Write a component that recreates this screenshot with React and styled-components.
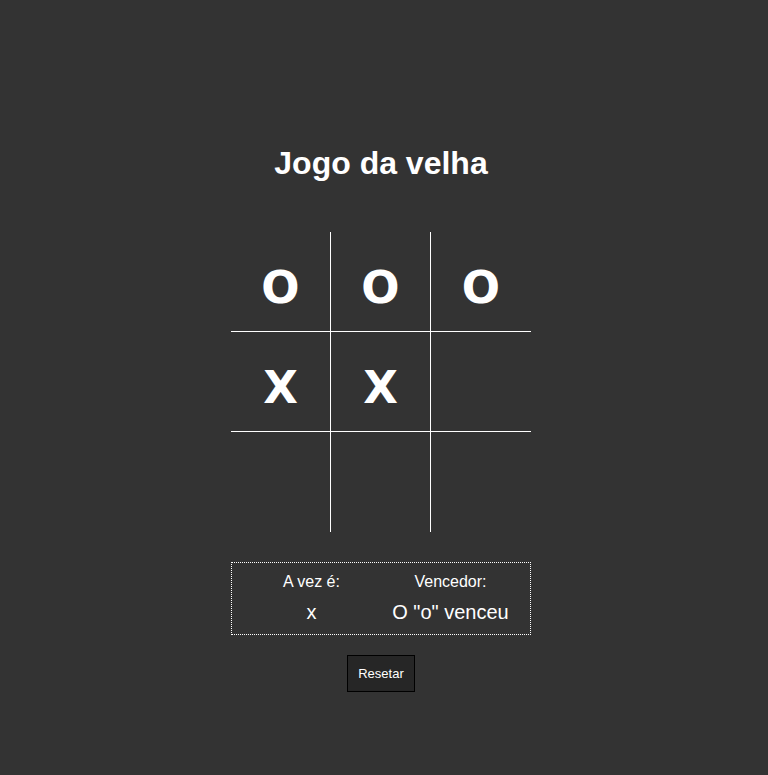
import React, { useState } from 'react'
import styled, { createGlobalStyle } from 'styled-components'

const GlobalStyle = createGlobalStyle`
    html, body {
        margin: 0;
        padding: 0;
        background: #333333;
        color: #ffffff;
        font-family: "Liberation Sans", Arial, sans-serif;
    }
`

const Page = styled.div`
    min-height: 775px;
    display: flex;
    flex-direction: column;
    align-items: center;
    padding: 145px 6px 0 0;
    box-sizing: border-box;
`

const Title = styled.h1`
    margin: 0 0 50px;
    font-size: 32px;
    line-height: 37px;
    font-weight: bold;
`

const Board = styled.div`
    display: grid;
    grid-template-columns: repeat(3, 100px);
    grid-template-rows: repeat(3, 100px);
`

const Cell = styled.div`
    display: flex;
    align-items: center;
    justify-content: center;
    box-sizing: border-box;
    padding-top: 12px;
    border-right: ${props => (props.col < 2 ? '1px solid #ffffff' : 'none')};
    border-bottom: ${props => (props.row < 2 ? '1px solid #ffffff' : 'none')};
    font-family: "DejaVu Sans", Verdana, sans-serif;
    font-weight: bold;
    font-size: 45px;
    cursor: pointer;
`

const Info = styled.div`
    margin-top: 30px;
    width: 300px;
    box-sizing: border-box;
    border: 1px dotted #ffffff;
    padding: 10px 0;
    display: flex;
    justify-content: center;
`

const InfoColumn = styled.div`
    width: 139px;
    display: flex;
    flex-direction: column;
    align-items: center;
    gap: 10px;
`

const Label = styled.span`
    font-size: 16px;
    line-height: 18px;
`

const Value = styled.span`
    font-size: 20px;
    line-height: 23px;
`

const ResetButton = styled.button`
    margin-top: 20px;
    padding: 10px 10px;
    background: #262626;
    color: #ffffff;
    border: 1px solid #000000;
    border-radius: 0;
    font-family: "Liberation Sans", Arial, sans-serif;
    font-size: 13px;
    line-height: 15px;
    cursor: pointer;
`

const initialBoard = ['o', 'o', 'o', 'x', 'x', '', '', '', '']

const App = () => {
    const [board, setBoard] = useState(initialBoard)

    const resetHandler = () => {
        setBoard(Array(9).fill(''))
    }

    return (
        <React.Fragment>
            <GlobalStyle />
            <Page>
                <Title>Jogo da velha</Title>
                <Board>
                    {board.map((value, i) => (
                        <Cell key={i} row={Math.floor(i / 3)} col={i % 3}>
                            {value.toUpperCase()}
                        </Cell>
                    ))}
                </Board>
                <Info>
                    <InfoColumn>
                        <Label>A vez é:</Label>
                        <Value>x</Value>
                    </InfoColumn>
                    <InfoColumn>
                        <Label>Vencedor:</Label>
                        <Value>O "o" venceu</Value>
                    </InfoColumn>
                </Info>
                <ResetButton onClick={resetHandler}>Resetar</ResetButton>
            </Page>
        </React.Fragment>
    )
}

export default App
